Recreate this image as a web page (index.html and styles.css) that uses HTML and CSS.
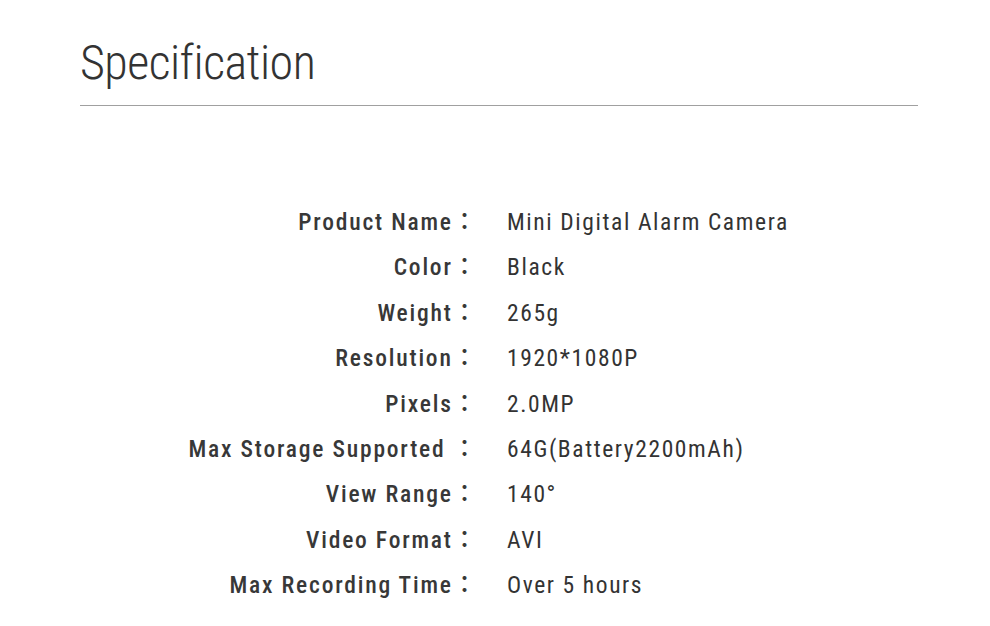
FILE: index.html
```html
<!DOCTYPE html>
<html>
<head>
<meta charset="utf-8">
<link rel="stylesheet" href="styles.css">
</head>
<body>
<div class="page">
  <h1 class="title">Specification</h1>
  <div class="rule"></div>
  <div class="specs">
    <div class="label">Product Name：</div><div class="value">Mini Digital Alarm Camera</div>
    <div class="label">Color：</div><div class="value">Black</div>
    <div class="label">Weight：</div><div class="value">265g</div>
    <div class="label">Resolution：</div><div class="value">1920*1080P</div>
    <div class="label">Pixels：</div><div class="value">2.0MP</div>
    <div class="label">Max Storage Supported ：</div><div class="value">64G(Battery2200mAh)</div>
    <div class="label">View Range：</div><div class="value">140°</div>
    <div class="label">Video Format：</div><div class="value">AVI</div>
    <div class="label">Max Recording Time：</div><div class="value">Over 5 hours</div>
  </div>
</div>
</body>
</html>
```
FILE: styles.css
```css
html, body {
  margin: 0;
  padding: 0;
  background: #ffffff;
}
body {
  font-family: "Roboto Condensed", Roboto, "Noto Sans CJK JP", sans-serif;
  color: #333333;
}
.page {
  width: 990px;
  height: 626px;
  padding: 36px 72px 0 80px;
  box-sizing: border-box;
}
.title {
  margin: 0;
  font-size: 48px;
  font-weight: 300;
  letter-spacing: -0.5px;
  line-height: 54px;
  color: #333;
}
.rule {
  margin-top: 15px;
  height: 1px;
  background: #a0a0a0;
}
.specs {
  display: grid;
  grid-template-columns: 398px 1fr;
  column-gap: 29px;
  margin-top: 94px;
  font-size: 23.5px;
  line-height: 45.4px;
}
.label {
  text-align: right;
  font-weight: 500;
  letter-spacing: 1.8px;
  color: #383838;
}
.value {
  font-weight: 400;
  letter-spacing: 1.6px;
  color: #333;
}
```
